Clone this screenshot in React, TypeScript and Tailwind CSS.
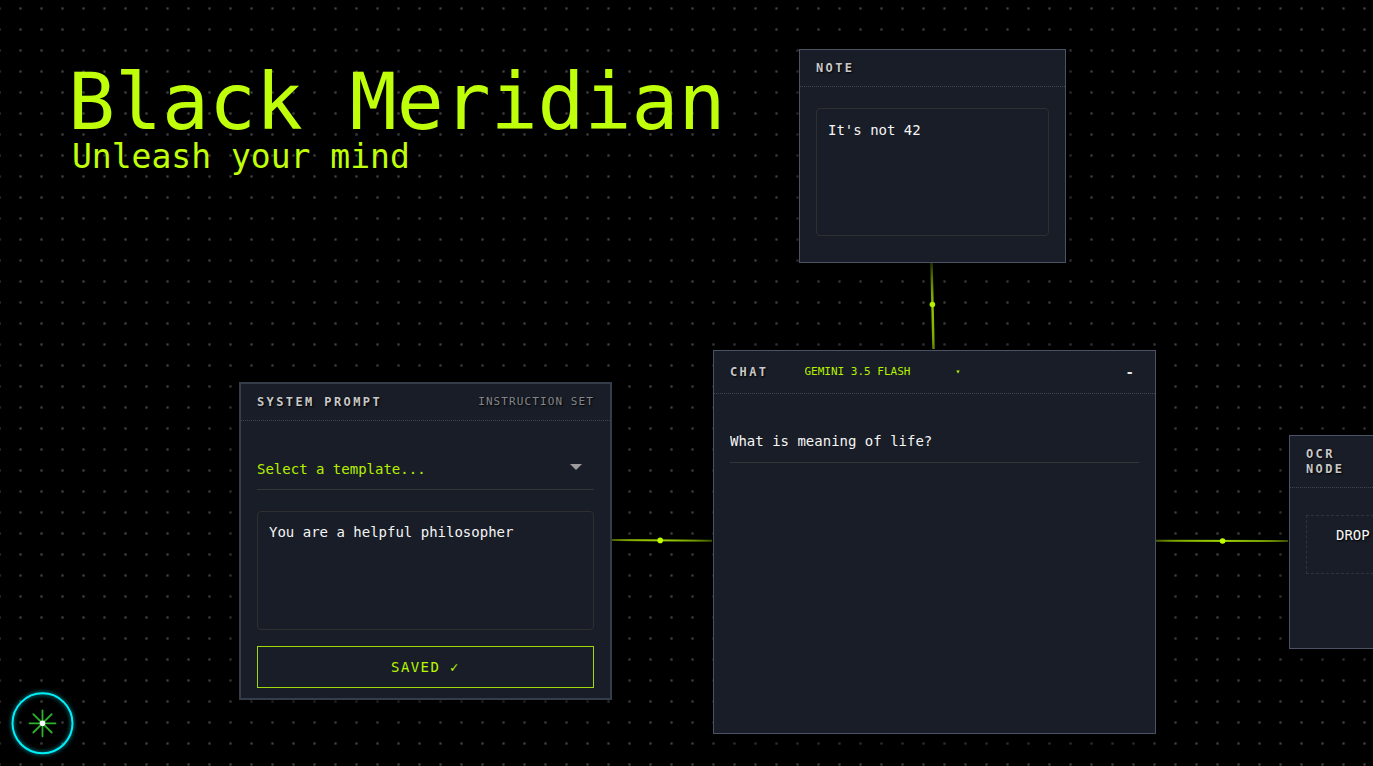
import type { ReactNode } from "react";
import clsx from "clsx";

const label =
  "text-xs leading-[15px] font-bold tracking-[0.2em] text-[#c8c8c8] [text-shadow:1px_1px_2px_#000]";
const field =
  "block w-full resize-none rounded border border-[#2f2f30] bg-transparent px-[11px] text-sm leading-5 text-[#f5f5f5] outline-none";

type NodeProps = {
  className: string;
  header: ReactNode;
  headerClassName?: string;
  children: ReactNode;
};

function CanvasNode({ className, header, headerClassName, children }: NodeProps) {
  return (
    <section
      className={clsx(
        "absolute flex flex-col bg-[#191d27] shadow-[0_4px_24px_rgba(0,0,0,0.8)]",
        className
      )}
    >
      <header
        className={clsx(
          "flex items-center border-b border-dotted border-[#44454c] px-4",
          headerClassName ?? "h-[37px]"
        )}
      >
        {header}
      </header>
      {children}
    </section>
  );
}

function Wires() {
  return (
    <svg className="absolute inset-0 h-full w-full" fill="none" aria-hidden="true">
      <defs>
        <linearGradient id="note-chat" gradientUnits="userSpaceOnUse" x1="932" y1="263" x2="934" y2="350">
          <stop offset="0" stopColor="#4d6600" />
          <stop offset="0.5" stopColor="#8fbf00" />
          <stop offset="1" stopColor="#84b000" />
        </linearGradient>
        <linearGradient id="prompt-chat" gradientUnits="userSpaceOnUse" x1="612" y1="540" x2="713" y2="541">
          <stop offset="0" stopColor="#7a9f00" />
          <stop offset="0.5" stopColor="#9fd400" />
          <stop offset="1" stopColor="#5f7f00" />
        </linearGradient>
        <linearGradient id="chat-ocr" gradientUnits="userSpaceOnUse" x1="1156" y1="541" x2="1288" y2="541">
          <stop offset="0" stopColor="#739900" />
          <stop offset="0.5" stopColor="#9fd400" />
          <stop offset="1" stopColor="#5f7f00" />
        </linearGradient>
      </defs>
      <path d="M931.5 263 933.5 349" stroke="url(#note-chat)" strokeWidth="2.5" />
      <path d="M612 540 712 540.8" stroke="url(#prompt-chat)" strokeWidth="2" />
      <path d="M1156 540.8 1288 541.1" stroke="url(#chat-ocr)" strokeWidth="2" />
      <circle cx="932.4" cy="304.5" r="2.8" fill="#b4f000" />
      <circle cx="660.2" cy="540.4" r="2.8" fill="#bfff00" />
      <circle cx="1222.6" cy="541" r="2.8" fill="#bfff00" />
    </svg>
  );
}

function MenuButton() {
  return (
    <button aria-label="Open menu" className="absolute bottom-1 left-1 rounded-full">
      <svg width="78" height="78" viewBox="0 0 78 78" fill="none">
        <circle
          cx="38.5"
          cy="39.3"
          r="30"
          stroke="#00f0f8"
          strokeWidth="2"
          className="drop-shadow-[0_0_2px_#00b8c8]"
        />
        <path
          d="M38.5 26.3v26M25.5 39.3h26M29.3 30.1l18.4 18.4M47.7 30.1 29.3 48.5"
          stroke="#2bb52b"
          strokeWidth="1.8"
          strokeLinecap="round"
        />
        <circle cx="38.5" cy="39.3" r="2.8" fill="#fff" />
      </svg>
    </button>
  );
}

export default function App() {
  return (
    <main className="relative h-screen w-full overflow-hidden bg-black bg-[radial-gradient(ellipse_2px_2px_at_center,#3c3c3c_30%,transparent_100%)] bg-size-[21px_21px] bg-position-[10px_19px] font-['DejaVu_Sans_Mono',monospace]">
      <div className="px-[68px] pt-[60px] text-[#c0ff0a]">
        <h1 className="text-[78px] leading-[84px] whitespace-nowrap">Black Meridian</h1>
        <p className="pl-1 text-[33px] leading-[26px]">Unleash your mind</p>
      </div>

      <Wires />

      <CanvasNode
        className="top-[49px] left-[799px] h-[214px] w-[267px] border border-[#4a5263]"
        header={<h2 className={label}>NOTE</h2>}
      >
        <div className="px-4 pt-[21px]">
          <textarea
            aria-label="Note"
            className={clsx(field, "h-32 py-[11px]")}
            defaultValue="It's not 42"
          />
        </div>
      </CanvasNode>

      <CanvasNode
        className="top-[382px] left-[239px] h-[318px] w-[373px] border-2 border-[#353c4a]"
        header={
          <>
            <h2 className={label}>SYSTEM PROMPT</h2>
            <span className="ml-auto text-[11px] tracking-widest text-[#85868a] [text-shadow:1px_1px_2px_#000]">
              INSTRUCTION SET
            </span>
          </>
        }
      >
        <div className="flex flex-col px-4 pt-7">
          <div className="flex items-center border-b border-[#333537]">
            <select
              aria-label="Template"
              className="h-10 flex-1 appearance-none bg-transparent text-sm text-[#b4f000] outline-none"
            >
              <option>Select a template...</option>
            </select>
            <svg className="pointer-events-none mr-3 mb-1" width="12" height="6" viewBox="0 0 12 6" aria-hidden="true">
              <path d="M0 0h12L6 6z" fill="#9c9c9c" />
            </svg>
          </div>
          <textarea
            aria-label="System prompt"
            className={clsx(field, "mt-[21px] h-[119px] py-[10px]")}
            defaultValue="You are a helpful philosopher"
          />
          <button className="mt-4 h-[42px] border border-[#a0d90a] text-sm tracking-widest text-[#b8f800]">
            SAVED ✓
          </button>
        </div>
      </CanvasNode>

      <CanvasNode
        className="top-[350px] left-[713px] h-[384px] w-[443px] border border-[#4a5263]"
        headerClassName="h-[43px]"
        header={
          <>
            <h2 className={label}>CHAT</h2>
            <select
              aria-label="Model"
              className="ml-9 w-[151px] appearance-none bg-transparent text-[11px] text-[#b4f000] outline-none"
            >
              <option>GEMINI 3.5 FLASH</option>
            </select>
            <span className="text-[8px] text-[#b4f000]">▾</span>
            <button aria-label="Minimize" className="ml-auto px-[5px] text-sm font-bold text-[#e6e6e6]">
              -
            </button>
          </>
        }
      >
        <div className="px-4 pt-[26px]">
          <input
            aria-label="Message"
            className="h-[43px] w-full border-b border-[#333537] bg-transparent text-sm text-[#f5f5f5] outline-none"
            defaultValue="What is meaning of life?"
          />
        </div>
      </CanvasNode>

      <CanvasNode
        className="top-[435px] left-[1289px] h-[214px] w-[267px] border border-[#4a5263]"
        headerClassName="h-[52px]"
        header={
          <h2 className={label}>
            OCR
            <br />
            NODE
          </h2>
        }
      >
        <div className="px-4 pt-[27px]">
          <button className="flex h-[59px] w-full border border-dashed border-[#333337] px-[29px] pt-[9px] text-sm text-[#f5f5f5] [text-shadow:1px_1px_2px_#000]">
            DROP
          </button>
        </div>
      </CanvasNode>

      <MenuButton />
    </main>
  );
}
